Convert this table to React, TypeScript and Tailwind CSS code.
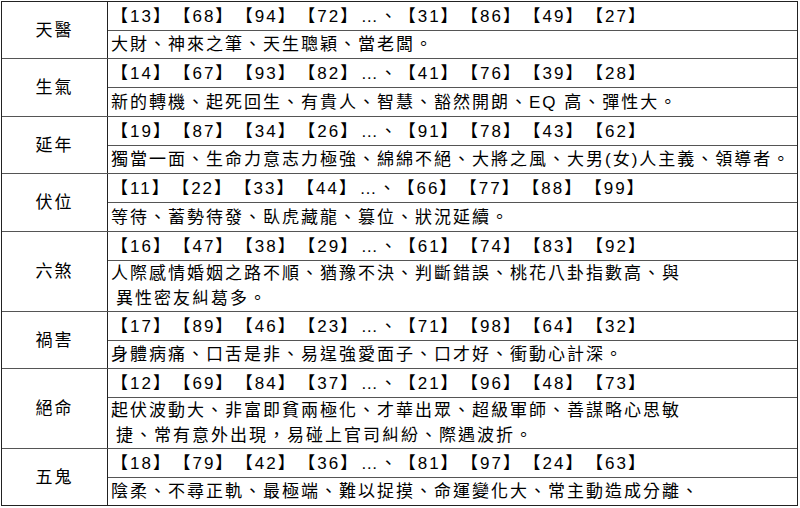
import React from "react";

type Row = { label: string; nums: string[]; lines: string[]; h: string; first?: boolean };

const rows: Row[] = [
  { label: "天醫", nums: ["13", "68", "94", "72", "31", "86", "49", "27"], lines: ["大財、神來之筆、天生聰穎、當老闆。"], h: "h-[56px]", first: true },
  { label: "生氣", nums: ["14", "67", "93", "82", "41", "76", "39", "28"], lines: ["新的轉機、起死回生、有貴人、智慧、豁然開朗、EQ 高、彈性大。"], h: "h-[58px]" },
  { label: "延年", nums: ["19", "87", "34", "26", "91", "78", "43", "62"], lines: ["獨當一面、生命力意志力極強、綿綿不絕、大將之風、大男(女)人主義、領導者。"], h: "h-[57px]" },
  { label: "伏位", nums: ["11", "22", "33", "44", "66", "77", "88", "99"], lines: ["等待、蓄勢待發、臥虎藏龍、篡位、狀況延續。"], h: "h-[58px]" },
  { label: "六煞", nums: ["16", "47", "38", "29", "61", "74", "83", "92"], lines: ["人際感情婚姻之路不順、猶豫不決、判斷錯誤、桃花八卦指數高、與", "異性密友糾葛多。"], h: "h-[80px]" },
  { label: "禍害", nums: ["17", "89", "46", "23", "71", "98", "64", "32"], lines: ["身體病痛、口舌是非、易逞強愛面子、口才好、衝動心計深。"], h: "h-[57px]" },
  { label: "絕命", nums: ["12", "69", "84", "37", "21", "96", "48", "73"], lines: ["起伏波動大、非富即貧兩極化、才華出眾、超級軍師、善謀略心思敏", "捷、常有意外出現，易碰上官司糾紛、際遇波折。"], h: "h-[80px]" },
  { label: "五鬼", nums: ["18", "79", "42", "36", "81", "97", "24", "63"], lines: ["陰柔、不尋正軌、最極端、難以捉摸、命運變化大、常主動造成分離、"], h: "h-[57px]" },
];

function NumLine({ nums }: { nums: string[] }) {
  return (
    <span className="whitespace-pre flex items-center">
      {nums.slice(0, 4).map((n, i) => (
        <span key={i} className="mr-[1.5px]">【{n}】</span>
      ))}
      <span className="mr-[0px]">…、</span>
      {nums.slice(4).map((n, i) => (
        <span key={i} className="mr-[1.5px]">【{n}】</span>
      ))}
    </span>
  );
}

export default function App() {
  return (
    <div className="w-[800px] h-[508px] bg-white pt-[1px] pl-[1px] text-black font-['Liberation_Sans','Noto_Sans_CJK_TC',sans-serif] text-[17px] tracking-[2px] leading-[25px]">
      <div className="w-[797px] border border-[#222] flex flex-col">
        {rows.map((r, i) => (
          <div key={i} className={`flex ${r.h} ${r.first ? "" : "border-t border-[#555]"}`}>
            <div className="w-[106px] shrink-0 border-r border-[#222] flex items-center justify-center">
              {r.label}
            </div>
            <div className="flex-1 flex flex-col">
              <div className="h-[29px] shrink-0 border-b border-[#555] flex items-center pl-[3px]">
                <NumLine nums={r.nums} />
              </div>
              <div className="flex-1 flex flex-col justify-center pl-[3px]">
                {r.lines.map((l, j) => (
                  <div key={j} className={`whitespace-nowrap ${j > 0 ? "pl-[5px]" : ""}`}>
                    {l}
                  </div>
                ))}
              </div>
            </div>
          </div>
        ))}
      </div>
    </div>
  );
}
